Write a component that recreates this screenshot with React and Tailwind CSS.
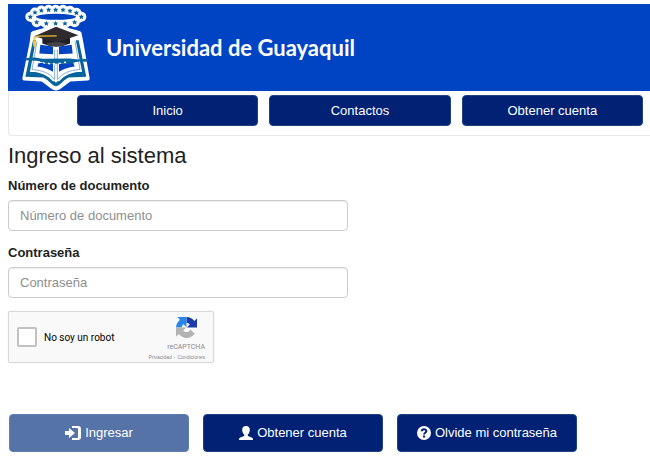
import React from "react";

const NAV_ITEMS = ["Inicio", "Contactos", "Obtener cuenta"];

const STARS = [
  [91, 50], [105, 37], [124, 31], [146, 29], [167, 29], [189, 29], [210, 32],
  [229, 38], [244, 50], [110, 66], [139, 70], [167, 70], [195, 70], [224, 66],
];

/**
 * University crest: ring of stars, graduation cap and open book
 */
function Crest() {
  return (
    <svg viewBox="66 12 204 260" className="h-[87px] w-[68px]" role="img" aria-label="Escudo">
      {/* Book outline */}
      <path
        d="M92 102q0-8 10-10l66-18 68 18q10 2 10 14l4 20 19 109q0 6-5 6l-53 3-29 22q-14 10-28 0l-29-22-53-3q-5 0-5-6l22-109Z"
        fill="#fff"
      />

      {/* Cloud behind the stars */}
      <g fill="#fff">
        <ellipse cx="168" cy="50" rx="88" ry="30" />
        {STARS.map(([x, y]) => (
          <circle key={`${x}-${y}`} cx={x} cy={y} r="15" />
        ))}
      </g>
      <ellipse cx="168" cy="50" rx="60" ry="9" fill="#0043c3" />
      {STARS.map(([x, y]) => (
        <path
          key={`${x}-${y}`}
          transform={`translate(${x} ${y})`}
          d="M0-8 2-3 8-3 4 1 5 7 0 4-5 7-4 1-8-3-2-3Z"
          fill="#07639c"
        />
      ))}

      {/* Book cover */}
      <path d="m99 120-23 110 54 2q16 8 24 19 14 14 28 0 8-11 24-19l53-2-23-110Z" fill="#07639c" />
      <path d="m108 118-18 96q50 0 78 34 28-34 78-34l-19-96Z" fill="#fff" />

      {/* Pages */}
      <g fill="#0043c3">
        <path d="m121 134 38 5v23l-41-2ZM215 134l-38 5v23l41-2Z" />
        <path d="m116 188 43 3v24q-18-12-47-16ZM220 188l-43 3v24q18-12 47-16Z" />
      </g>
      <path
        d="m111 124-15 84q46 2 68 30v-90M225 124l15 84q-46 2-68 30v-90"
        fill="none"
        stroke="#4f8ab6"
        strokeWidth="2"
      />
      <path
        d="m90 213q47 0 71 30M246 213q-47 0-71 30"
        fill="none"
        stroke="#fff"
        strokeWidth="4"
      />

      {/* River */}
      <path d="m74 174 31-2 22 4 82-1 26 3 29-2v9l-28-1-26 6-68 1-33-9-35-2Z" fill="#07639c" />
      <path
        d="m115 184 6 4m8-1 6 3m9-1 6 3m9-2 6 1m11-1 6-1m10-2 6-1"
        stroke="#fff"
        strokeWidth="4"
      />

      {/* Graduation cap */}
      <path d="M127 113v17q41 19 83 0v-17Z" fill="#1e2027" />
      <path d="m138 130 30-6 30 6-6 6q-24 5-48 0Z" fill="#454346" />
      <path d="m103 108 65-28 67 25-67 22Z" fill="#30292d" />
      <path d="m170 107-56 1-11 5v17" fill="none" stroke="#ecc22d" strokeWidth="4" />
      <path d="m99 122 8 1 2 18-9-2Z" fill="#f3ce27" />
    </svg>
  );
}

/** Arrow entering a frame */
function LoginIcon() {
  return (
    <svg viewBox="0 0 16 14" className="h-[14px] w-4" fill="currentColor" aria-hidden="true">
      <path d="M0 5h4V2l6 5-6 5V9H0Z" />
      <path d="M7 0h6q3 0 3 3v8q0 3-3 3H7v-2h5q1 0 1-1V3q0-1-1-1H7Z" />
    </svg>
  );
}

function UserIcon() {
  return (
    <svg viewBox="0 0 14 14" className="size-[14px]" fill="currentColor" aria-hidden="true">
      <path d="M7 0c2.500 0 3.800 1.500 3.800 3.700 0 2-.7 3.800-2 4.900v.6c0 .6.5.9 1.200 1.200 2 .8 4 1.200 4 2.500V14H0v-1.100c0-1.300 2-1.700 4-2.500.7-.3 1.200-.6 1.200-1.200v-.6c-1.300-1.100-2-2.900-2-4.900C3.200 1.500 4.500 0 7 0Z" />
    </svg>
  );
}

function HelpIcon() {
  return (
    <svg viewBox="0 0 14 14" className="size-[14px]" aria-hidden="true">
      <circle cx="7" cy="7" r="7" fill="currentColor" />
      <path
        d="M4.700 5.200C4.800 2.600 9.400 2.600 9.400 5.100 9.400 6.700 7.100 6.700 7.100 8.400"
        fill="none"
        stroke="#002174"
        strokeWidth="2"
      />
      <path d="M6 9.500h2.200v2H6Z" fill="#002174" />
    </svg>
  );
}

function RecaptchaLogo() {
  return (
    <svg viewBox="0 0 64 64" className="size-[21px]" aria-hidden="true">
      <path d="M64 32V4l-8 8C50 5 41 0 32 0v18c6 0 8 2 10 5l-9 9Z" fill="#1c3aa9" />
      <path d="M32 0H4l8 8C5 14 0 23 0 32h18c0-6 2-8 5-10l9 9Z" fill="#2a84ea" />
      <path
        d="M0 32v28l8-8c6 7 15 12 24 12 10 0 19-5 25-13L44 38c-2 5-6 8-12 8-5 0-8-2-10-5l9-9Z"
        fill="#b3b3b3"
      />
    </svg>
  );
}

function Field({ id, label, type = "text" }) {
  return (
    <div className="flex flex-col">
      <label htmlFor={id} className="mb-1 text-[13px] leading-5 font-bold text-[#222]">
        {label}
      </label>
      <input
        id={id}
        type={type}
        placeholder={label}
        className="h-[31px] w-full rounded border border-[#ccc] bg-white px-[11px] text-[13px] shadow-[inset_0_1px_1px_rgba(0,0,0,0.075)] placeholder:text-[#8e8e8e]"
      />
    </div>
  );
}

function ActionButton({ icon, children, muted = false }) {
  return (
    <button
      type="button"
      className={`flex h-[38px] flex-1 items-center justify-center gap-1 rounded border text-[13px] text-white ${
        muted ? "border-[#5f7eb2] bg-[#5673a8]" : "border-[#1d4480] bg-[#002174]"
      }`}
    >
      {icon}
      <span className="whitespace-nowrap">{children}</span>
    </button>
  );
}

export default function App() {
  return (
    <div className="bg-white pt-1 pb-1 pl-2 font-['Liberation_Sans',Arial,sans-serif] text-[#222]">
      <header className="flex items-center bg-[#0043c3] pl-[14px]">
        <Crest />
        <div className="pl-4 font-[Lato,'Open_Sans',sans-serif] text-[22px] leading-6 font-bold text-white">
          Universidad de Guayaquil
        </div>
      </header>

      <nav className="flex gap-[11px] rounded-bl border-b border-l border-[#e7e7e7] pt-1 pr-[7px] pb-[9px] pl-[68px]">
        {NAV_ITEMS.map((item) => (
          <a
            key={item}
            href="#"
            className="flex h-[31px] flex-1 items-center justify-center rounded border border-[#1d4480] bg-[#002174] text-[13px] text-white"
          >
            {item}
          </a>
        ))}
      </nav>

      <main>
        <h1 className="mt-2 text-[22px] leading-6">Ingreso al sistema</h1>

        <form>
          <div className="mt-2 flex w-[53%] flex-col gap-3">
            <Field id="documento" label="Número de documento" />
            <Field id="contrasena" label="Contraseña" type="password" />
          </div>

          {/* reCAPTCHA box */}
          <div className="mt-[13px] flex h-[52px] w-[206px] items-center justify-between rounded-xs border border-[#d8d8d8] bg-[#f9f9f9] pr-2 pl-2 shadow-[0_0_2px_rgba(0,0,0,0.08)]">
            <div className="flex items-center gap-[7px]">
              <input
                id="robot"
                type="checkbox"
                className="size-5 appearance-none rounded-xs border-2 border-[#c1c1c1] bg-white"
              />
              <label htmlFor="robot" className="font-[Roboto,sans-serif] text-[10px] whitespace-nowrap text-black">
                No soy un robot
              </label>
            </div>
            <div className="flex flex-col items-end pt-1 text-[#8a8a8a]">
              <div className="flex flex-col items-center">
                <RecaptchaLogo />
                <span className="pt-1 font-[Roboto,sans-serif] text-[7px] leading-[10px]">reCAPTCHA</span>
              </div>
              <div className="flex gap-0.5 text-[5px] leading-[10px] whitespace-nowrap">
                <a href="#">Privacidad</a>
                <span>-</span>
                <a href="#">Condiciones</a>
              </div>
            </div>
          </div>

          <div className="mt-[51px] flex max-w-[569px] gap-[14px] pl-px">
            <ActionButton icon={<LoginIcon />} muted>
              Ingresar
            </ActionButton>
            <ActionButton icon={<UserIcon />}>Obtener cuenta</ActionButton>
            <ActionButton icon={<HelpIcon />}>Olvide mi contraseña</ActionButton>
          </div>
        </form>
      </main>
    </div>
  );
}
